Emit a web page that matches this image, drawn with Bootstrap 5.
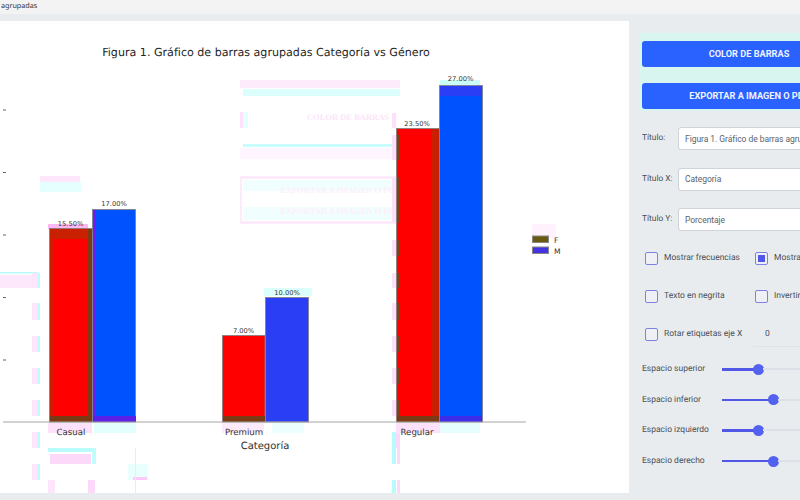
<!DOCTYPE html>
<html lang="es">
<head>
<meta charset="utf-8">
<title>Gráfico de barras agrupadas</title>
<link href="https://cdn.jsdelivr.net/npm/bootstrap@5.3.0/dist/css/bootstrap.min.css" rel="stylesheet">
<style>
html,body{height:100%;overflow:hidden}
body{width:800px;height:500px;background:#e9ecef;font-family:Roboto,sans-serif;color:#495057;text-rendering:geometricPrecision}
.winbar{height:14px;background:#f3f3f3;font-size:7.2px;line-height:13px;padding-left:1px;color:#333;font-family:"Noto Sans",sans-serif}
.workarea{height:486px;padding-top:7px}
.plotpanel{width:629px;height:472px;background:#fff;flex:none}
.plotpanel svg{display:block}
.sidepanel{width:240px;flex:none;padding-left:13px;padding-top:12px}
.bigbtn{height:26px;width:214px;padding:0;background:#2962ff;border:0;border-radius:3px;font-size:9.2px;font-weight:700;color:#eef3ff;white-space:nowrap}
.bigbtn:hover{background:#2962ff}
.btnstack{gap:16px;margin:0 0 16px -2px;padding:8px 0 2px 2px;background:#d8f5f0}
.fieldrow{height:23px;margin-bottom:17.5px;align-items:center}
.fieldname{width:36px;font-size:8.4px;flex:none;color:#495057}
.fieldrow .form-control{width:180px;height:23px;min-height:0;padding:0 6px;font-size:8.5px;letter-spacing:-.05px;color:#5c636a;border:1px solid #ced4da;border-radius:3px;flex:none}
.checkgrid{margin-top:20px;padding-left:3px}
.checkrow{height:14px;margin-bottom:24px;align-items:center;font-size:8.5px}
.checkcell{width:110px;flex:none;align-items:center;gap:6px;white-space:nowrap}
.boxmark{width:13px;height:13px;border:1.2px solid #7d82de;border-radius:2px;background:#eef0f6;flex:none;display:flex;align-items:center;justify-content:center}
.boxmark i{display:block;width:7px;height:7px;background:#5158e8}
.rotval{width:110px;border-bottom:1px solid #dfe3e7;height:25px;line-height:25px;padding-left:12px;margin-left:-1px;flex:none}
.rotcell{width:109px}
.sliderrow{height:30.6px;align-items:center;font-size:8.5px}
.slidername{width:80px;flex:none}
.slidefill{height:2.5px;background:#5158e8;flex:none}
.slideknob{width:11px;height:11px;border-radius:50%;background:#5261f0;flex:none;margin:0 -1px}
.slidetail{height:2px;width:60px;background:#dde0e6;flex:none}
.sliderstack{margin-top:-11px}
</style>
</head>
<body>
<div class="winbar">agrupadas</div>
<div class="workarea d-flex">
  <div class="plotpanel">
    <svg width="629" height="472" viewBox="0 21 629 472" font-family="'DejaVu Sans',sans-serif" fill="#262626">
      <defs>
        <g id="dashpink"><rect y="273" width="6" height="15"/><rect y="303" width="6" height="17"/><rect y="336" width="6" height="16"/><rect y="368" width="6" height="16"/><rect y="400" width="6" height="16"/></g>
        <g id="dashlow"><rect y="432" width="6" height="16"/><rect y="464" width="6" height="16"/></g>
      </defs>
      <g>
        <rect x="240" y="80" width="160" height="8" fill="#fdeafb"/>
        <rect x="243" y="89" width="157" height="7" fill="#dcfffd"/>
        <rect x="240" y="112" width="3" height="16" fill="#fde2fa"/>
        <rect x="243" y="112" width="5" height="16" fill="#e6fffe"/>
        <rect x="243" y="144" width="149" height="3" fill="#c9fdfb"/>
        <rect x="240" y="148" width="152" height="11" fill="#fef5fe"/>
        <rect x="240" y="176" width="156" height="48" fill="#fdeafb"/>
        <rect x="242" y="179" width="152" height="42" fill="#fff"/>
        <rect x="243" y="180" width="150" height="11" fill="#f0fffe"/>
        <rect x="243" y="207" width="150" height="13" fill="#f0fffe"/>
        <text x="348" y="120" font-family="'Liberation Serif',serif" font-size="8.500" font-weight="700" fill="#fde4fa" text-anchor="middle">COLOR DE BARRAS</text>
        <text x="340" y="193" font-family="'Liberation Serif',serif" font-size="8.500" font-weight="700" fill="#feeefc" text-anchor="middle">EXPORTAR A IMAGEN O PDF</text>
        <text x="340" y="214" font-family="'Liberation Serif',serif" font-size="8.500" font-weight="700" fill="#feeefc" text-anchor="middle">EXPORTAR A IMAGEN O PDF</text>
        <rect x="40" y="176" width="40" height="6" fill="#fde8fb"/>
        <rect x="40" y="182" width="41" height="10" fill="#e4fffe"/>
        <rect x="0" y="272" width="38" height="1.500" fill="#b8fbfa"/>
        <rect x="0" y="275" width="32" height="13" fill="#fde8fb"/>
        <g fill="#fde6fb" transform="translate(32 0)"><use href="#dashpink"/><use href="#dashlow"/></g>
        <g fill="#b8fbfa" transform="translate(38 0) scale(.3 1)"><use href="#dashpink"/><use href="#dashlow"/></g>
        <rect x="48" y="448" width="44" height="4" fill="#b8fbfa"/>
        <rect x="50" y="454" width="41" height="10" fill="#fdd9f9"/>
        <rect x="92" y="448" width="4" height="16" fill="#c2fbfa"/>
        <rect x="48" y="480" width="7" height="13" fill="#fde6fb"/>
        <rect x="88" y="480" width="7" height="13" fill="#fdd9f9"/>
        <rect x="128" y="464" width="20" height="16" fill="#e8fffe"/>
        <rect x="133" y="477" width="14" height="3" fill="#fdc9f6"/>
        <rect x="135" y="448" width="1" height="45" fill="#fde0fa"/>
        <g fill="#fde0fa" transform="translate(392 0) scale(.7 1)"><use href="#dashpink"/><rect y="113" width="6" height="15"/><rect y="135" width="6" height="25"/><rect y="177" width="6" height="46"/><rect y="240" width="6" height="16"/></g>
        <rect x="392" y="432" width="4" height="16" fill="#b8fbfa"/><rect x="396" y="432" width="4" height="16" fill="#fdd9f9"/>
        <rect x="392" y="448" width="4" height="16" fill="#b8fbfa"/><rect x="397" y="448" width="3" height="16" fill="#fdd9f9"/>
        <rect x="392" y="480" width="4" height="13" fill="#b8fbfa"/><rect x="397" y="480" width="3" height="13" fill="#fdd9f9"/>
        <rect x="532" y="224" width="24" height="14" fill="#fff2fd"/>
        <rect x="48" y="423" width="44" height="10" fill="#fde0fa"/>
        <rect x="94" y="423" width="42" height="10" fill="#e2fffe"/>
        <rect x="222" y="423" width="42" height="10" fill="#fdeafb"/>
        <rect x="272" y="423" width="32" height="10" fill="#ecfffe"/>
        <rect x="396" y="423" width="44" height="10" fill="#fde0fa"/>
        <rect x="440" y="423" width="40" height="10" fill="#e6fffe"/>
        <rect x="264" y="288" width="48" height="8" fill="#dcfffb"/>
        <rect x="440" y="80" width="40" height="5" fill="#ccfdf9"/>
        <rect x="48" y="224" width="40" height="5" fill="#fdb9f3"/>
      </g>
      <g stroke="#808080" stroke-width=".8">
        <rect x="49.500" y="228.500" width="42.500" height="193.500" fill="#ff0000"/>
        <rect x="92.500" y="209.500" width="43" height="212.500" fill="#0052ff"/>
        <rect x="222.500" y="335.500" width="42.500" height="86.500" fill="#ff0000"/>
        <rect x="265.500" y="297.500" width="43" height="124.500" fill="#2a3ff5"/>
        <rect x="396.500" y="128.500" width="42.500" height="293.500" fill="#ff0000"/>
        <rect x="439.500" y="85.500" width="43" height="336.500" fill="#0052ff"/>
      </g>
      <g>
        <rect x="50" y="229" width="41" height="10" fill="#c82000"/><rect x="50" y="239" width="4" height="177" fill="#d21a00"/><rect x="88" y="229" width="4" height="193" fill="#7a3a14"/><rect x="50" y="416" width="42" height="6" fill="#7a3a14"/>
        <rect x="223" y="416" width="42" height="6" fill="#7a3a14"/>
        <g fill="#76441a" transform="translate(397 0) scale(.5 1)"><use href="#dashpink"/><rect y="135" width="6" height="25"/><rect y="177" width="6" height="46"/><rect y="240" width="6" height="16"/></g>
        <rect x="432" y="129" width="7" height="293" fill="#c82000"/><rect x="397" y="416" width="42" height="6" fill="#7a3a14"/>
        <rect x="93" y="210" width="3" height="212" fill="#7318f0"/><rect x="93" y="416" width="43" height="6" fill="#5a20e6"/>
        <rect x="440" y="86" width="42" height="10" fill="#2a3ff5"/><rect x="440" y="416" width="42" height="6" fill="#3d2ce8"/>
      </g>
      <line x1="3" y1="422" x2="526" y2="422" stroke="#a6a6a6" stroke-width="1.200"/>
      <g stroke="#666" stroke-width="1"><line x1="3" y1="110" x2="6" y2="110"/><line x1="3" y1="172.500" x2="6" y2="172.500"/><line x1="3" y1="235" x2="6" y2="235"/><line x1="3" y1="297.500" x2="6" y2="297.500"/><line x1="3" y1="360" x2="6" y2="360"/></g>
      <text x="266" y="55.500" font-size="11.100" text-anchor="middle">Figura 1. Gráfico de barras agrupadas Categoría vs Género</text>
      <g font-size="6.700" text-anchor="middle" fill="#333">
        <text x="70.500" y="226">15.50%</text><text x="114" y="206">17.00%</text>
        <text x="243.500" y="332.500">7.00%</text><text x="287" y="294.500">10.00%</text>
        <text x="417" y="125.500">23.50%</text><text x="460.500" y="80.500">27.00%</text>
      </g>
      <g font-size="8.600" text-anchor="middle" fill="#333">
        <text x="71" y="435">Casual</text><text x="244" y="435">Premium</text><text x="417" y="435">Regular</text>
      </g>
      <text x="265" y="449" font-size="10" text-anchor="middle" fill="#333">Categoría</text>
      <rect x="532.500" y="236" width="16" height="6.500" fill="#6a5a10" stroke="#888"/>
      <rect x="532.500" y="247" width="16" height="6.500" fill="#4433e0" stroke="#888"/>
      <text x="554" y="242.500" font-size="7.600" fill="#333">F</text>
      <text x="554" y="253.500" font-size="7.600" fill="#333">M</text>
    </svg>
  </div>
  <div class="sidepanel">
    <div class="d-flex flex-column btnstack">
      <button type="button" class="btn btn-primary bigbtn">COLOR DE BARRAS</button>
      <button type="button" class="btn btn-primary bigbtn">EXPORTAR A IMAGEN O PDF</button>
    </div>
    <div class="d-flex fieldrow"><span class="fieldname">Título:</span><input class="form-control" value="Figura 1. Gráfico de barras agrupadas Categoría vs Género"></div>
    <div class="d-flex fieldrow"><span class="fieldname">Título X:</span><input class="form-control" value="Categoría"></div>
    <div class="d-flex fieldrow"><span class="fieldname">Título Y:</span><input class="form-control" value="Porcentaje"></div>
    <div class="checkgrid">
      <div class="d-flex checkrow">
        <div class="d-flex checkcell"><span class="boxmark"></span><span>Mostrar frecuencias</span></div>
        <div class="d-flex checkcell"><span class="boxmark"><i></i></span><span>Mostrar porcentajes</span></div>
      </div>
      <div class="d-flex checkrow">
        <div class="d-flex checkcell"><span class="boxmark"></span><span>Texto en negrita</span></div>
        <div class="d-flex checkcell"><span class="boxmark"></span><span>Invertir gráfico</span></div>
      </div>
      <div class="d-flex checkrow">
        <div class="d-flex checkcell rotcell"><span class="boxmark"></span><span>Rotar etiquetas eje X</span></div>
        <div class="rotval">0</div>
      </div>
    </div>
    <div class="sliderstack">
      <div class="d-flex sliderrow"><span class="slidername">Espacio superior</span><span class="slidefill" style="width:32px"></span><span class="slideknob"></span><span class="slidetail"></span></div>
      <div class="d-flex sliderrow"><span class="slidername">Espacio inferior</span><span class="slidefill" style="width:47px"></span><span class="slideknob"></span><span class="slidetail"></span></div>
      <div class="d-flex sliderrow"><span class="slidername">Espacio izquierdo</span><span class="slidefill" style="width:32px"></span><span class="slideknob"></span><span class="slidetail"></span></div>
      <div class="d-flex sliderrow"><span class="slidername">Espacio derecho</span><span class="slidefill" style="width:47px"></span><span class="slideknob"></span><span class="slidetail"></span></div>
    </div>
  </div>
</div>
<script src="https://cdn.jsdelivr.net/npm/bootstrap@5.3.0/dist/js/bootstrap.bundle.min.js"></script>
</body>
</html>
